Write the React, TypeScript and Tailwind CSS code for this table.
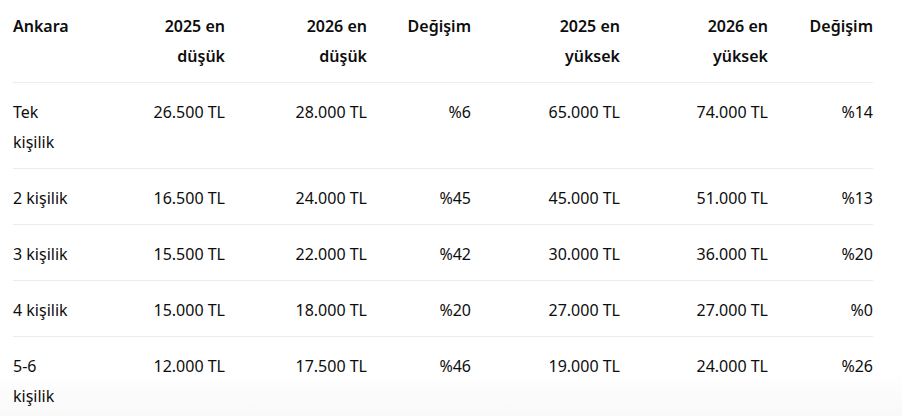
import React from "react";

const headers: React.ReactNode[] = [
  "Ankara",
  <>2025 en<br />düşük</>,
  <>2026 en<br />düşük</>,
  "Değişim",
  <>2025 en<br />yüksek</>,
  <>2026 en<br />yüksek</>,
  "Değişim",
];

const rows: React.ReactNode[][] = [
  [<>Tek<br />kişilik</>, "26.500 TL", "28.000 TL", "%6", "65.000 TL", "74.000 TL", "%14"],
  ["2 kişilik", "16.500 TL", "24.000 TL", "%45", "45.000 TL", "51.000 TL", "%13"],
  ["3 kişilik", "15.500 TL", "22.000 TL", "%42", "30.000 TL", "36.000 TL", "%20"],
  ["4 kişilik", "15.000 TL", "18.000 TL", "%20", "27.000 TL", "27.000 TL", "%0"],
  [<>5-6<br />kişilik</>, "12.000 TL", "17.500 TL", "%46", "19.000 TL", "24.000 TL", "%26"],
];

const grid = "grid grid-cols-[90px_122px_142px_104px_149px_148px_105px]";

export default function App() {
  return (
    <div
      className="w-[902px] h-[416px] overflow-hidden bg-[linear-gradient(to_bottom,#ffffff_370px,#f9f9f9_416px)] text-[#0d0d0d] text-[16px] leading-[30px]"
      style={{ fontFamily: '"Noto Sans", "Open Sans", sans-serif' }}
    >
      <div className="ml-[13px] w-[860px]">
        <div className={`${grid} border-b border-[#ececec] pt-[11px] pb-[11px] font-semibold`}>
          {headers.map((h, i) => (
            <div key={i} className={i === 0 ? "text-left" : "text-right"}>
              {h}
            </div>
          ))}
        </div>
        {rows.map((r, ri) => (
          <div
            key={ri}
            className={`${grid} pt-[14px] pb-[11px] ${ri < rows.length - 1 ? "border-b border-[#ececec]" : ""}`}
          >
            {r.map((c, ci) => (
              <div key={ci} className={ci === 0 ? "text-left" : "text-right"}>
                {c}
              </div>
            ))}
          </div>
        ))}
      </div>
    </div>
  );
}
